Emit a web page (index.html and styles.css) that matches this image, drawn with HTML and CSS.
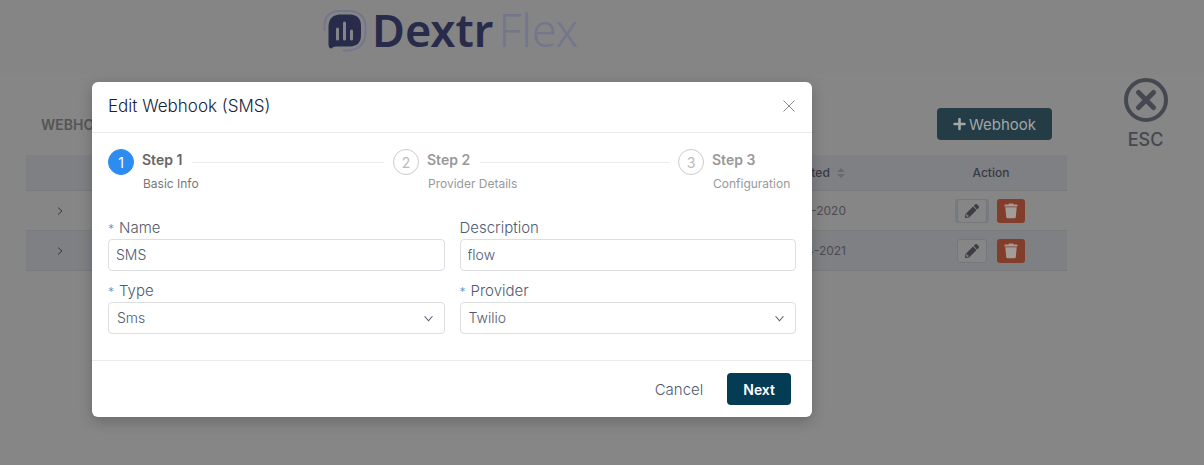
FILE: index.html
```html
<!DOCTYPE html>
<html lang="en">
<head>
<meta charset="utf-8">
<title>DextrFlex - Webhooks</title>
<link rel="stylesheet" href="styles.css">
</head>
<body>
<svg class="sprite" aria-hidden="true">
  <symbol id="pencil" viewBox="0 0 512 512"><path d="M497.900 142.100l-46.100 46.100c-4.700 4.700-12.300 4.700-17 0l-111-111c-4.700-4.700-4.700-12.300 0-17l46.100-46.100c18.700-18.700 49.100-18.700 67.900 0l60.100 60.100c18.800 18.700 18.800 49.100 0 67.900zM284.200 99.800L21.600 362.400.4 483.900c-2.900 16.400 11.400 30.600 27.800 27.800l121.500-21.300 262.600-262.600c4.700-4.700 4.700-12.300 0-17l-111-111c-4.800-4.700-12.400-4.700-17.100 0zM88 424h48v36.300l-64.500 11.300-31.100-31.100L51.700 376H88v48z"/></symbol>
  <symbol id="trash" viewBox="0 0 14 16"><path d="M1.300 1.500H4.500L5 .5h4l.5 1h3.200q.8 0 .8.700v.8q0 .5-.6.500H1.100Q.5 3.500.5 3v-.8q0-.7.800-.7zM1.300 4.300h11.400l-.9 9.700q-.1 1.300-1.400 1.300H3.600q-1.300 0-1.400-1.300z"/></symbol>
  <symbol id="chevron" viewBox="0 0 8 8"><path d="M2 .5L6 4 2 7.500" fill="none" stroke="currentColor" stroke-width="1"/></symbol>
</svg>

<header class="topbar">
  <a class="logo" href="#">
    <svg class="logo-mark" viewBox="0 0 44 44" aria-hidden="true">
      <path class="ring" d="M1.500 23V18Q2 4 15 3H28Q42 5 42.500 18V26Q41 41 26 42.500H20"/>
      <path class="bubble" d="M17 6.500H27Q38 7 38 18V27Q38 38 27 38.500H13Q10 38.500 8.500 40.500Q6 40.500 5.500 37V18Q6 7 17 6.500z"/>
      <path class="bars" d="M14.500 21v10M21.500 15v16M28.500 23v8"/>
    </svg>
    <span class="logo-name">Dextr</span><span class="logo-suffix">Flex</span>
  </a>
</header>

<main class="page">
  <section class="content">
    <div class="toolbar">
      <h1>WEBHOOKS</h1>
      <button class="add" type="button">
        <svg viewBox="0 0 448 512" aria-hidden="true"><path d="M416 208H272V64c0-17.670-14.330-32-32-32h-32c-17.670 0-32 14.330-32 32v144H32c-17.670 0-32 14.330-32 32v32c0 17.670 14.330 32 32 32h144v144c0 17.670 14.330 32 32 32h32c17.670 0 32-14.330 32-32V304h144c17.670 0 32-14.330 32-32v-32c0-17.670-14.330-32-32-32z"/></svg>
        Webhook
      </button>
    </div>
    <table class="hooks">
      <thead>
        <tr><th class="col-expand"></th><th></th>
          <th class="col-date">Created
            <svg class="sort" viewBox="0 0 8 10" aria-hidden="true"><path d="M4 0l4 4H0zM4 10l4-4H0z"/></svg></th>
          <th class="col-action">Action</th></tr>
      </thead>
      <tbody>
        <tr>
          <td class="col-expand"><button class="expand" type="button" aria-label="Expand row"><svg><use href="#chevron"/></svg></button></td>
          <td></td><td class="col-date date">28-10-2020</td>
          <td class="col-action"><div class="actions">
            <button class="edit focused" type="button" aria-label="Edit"><svg><use href="#pencil"/></svg></button>
            <button class="delete" type="button" aria-label="Delete"><svg><use href="#trash"/></svg></button>
          </div></td>
        </tr>
        <tr>
          <td class="col-expand"><button class="expand" type="button" aria-label="Expand row"><svg><use href="#chevron"/></svg></button></td>
          <td></td><td class="col-date date">15-04-2021</td>
          <td class="col-action"><div class="actions">
            <button class="edit" type="button" aria-label="Edit"><svg><use href="#pencil"/></svg></button>
            <button class="delete" type="button" aria-label="Delete"><svg><use href="#trash"/></svg></button>
          </div></td>
        </tr>
      </tbody>
    </table>
  </section>
  <button class="escape" type="button">
    <svg viewBox="0 0 44 44" aria-hidden="true"><circle cx="22" cy="22" r="20"/><path d="M14.500 14.500l15 15M29.500 14.500l-15 15"/></svg>
    ESC
  </button>
</main>

<form class="modal" role="dialog" aria-labelledby="modal-title">
  <header class="modal-head">
    <h2 id="modal-title">Edit Webhook (SMS)</h2>
    <button class="close" type="button" aria-label="Close"><svg viewBox="0 0 12 12"><path d="M.5.5l11 11M11.500.5l-11 11"/></svg></button>
  </header>
  <div class="modal-body">
    <ol class="steps">
      <li class="step current"><span class="num">1</span><div class="step-text"><div class="step-title">Step 1</div><div class="step-desc">Basic Info</div></div></li>
      <li class="step"><span class="num">2</span><div class="step-text"><div class="step-title">Step 2</div><div class="step-desc">Provider Details</div></div></li>
      <li class="step"><span class="num">3</span><div class="step-text"><div class="step-title">Step 3</div><div class="step-desc">Configuration</div></div></li>
    </ol>
    <div class="fields">
      <div class="field"><label class="required" for="name">Name</label><input id="name" type="text" value="SMS"></div>
      <div class="field"><label for="description">Description</label><input id="description" type="text" value="flow"></div>
      <div class="field"><label class="required" for="type">Type</label>
        <div class="select"><select id="type"><option>Sms</option></select><svg><use href="#chevron"/></svg></div></div>
      <div class="field"><label class="required" for="provider">Provider</label>
        <div class="select"><select id="provider"><option>Twilio</option></select><svg><use href="#chevron"/></svg></div></div>
    </div>
  </div>
  <footer class="modal-foot">
    <button class="cancel" type="button">Cancel</button>
    <button class="next" type="submit">Next</button>
  </footer>
</form>
</body>
</html>
```
FILE: styles.css
```css
* { box-sizing: border-box; }
body { margin: 0; min-height: 100vh; background: #868686; color: #383a40; font-family: Inter, "Open Sans", sans-serif; font-size: 14px; }
button { border: 0; margin: 0; padding: 0; background: none; color: inherit; font: inherit; cursor: pointer; }
h1, h2, ol { margin: 0; padding: 0; }
svg { display: block; fill: currentColor; }
.sprite { position: absolute; width: 0; height: 0; }

.topbar { height: 74px; padding: 8px 0 0 323px; background: #858585; }
.logo { display: inline-flex; align-items: center; height: 44px; color: #292b4b; font-family: "Noto Sans", sans-serif; font-size: 45px; line-height: 44px; text-decoration: none; }
.logo-mark { width: 44px; height: 44px; margin-right: 5px; }
.ring { fill: none; stroke: #74768d; stroke-width: 2; }
.bars { fill: none; stroke: #858589; stroke-width: 3; stroke-linecap: round; }
.logo-name { font-weight: 600; }
.logo-suffix { margin-left: 5px; color: #74768c; font-weight: 300; }

.page { display: grid; grid-template-columns: 1fr 117px; gap: 20px; align-items: start; padding-left: 26px; }
.toolbar { display: flex; align-items: center; justify-content: space-between; padding: 34px 15px 15px; }
.toolbar h1 { color: #555; font-size: 14px; font-weight: 600; }
.add { display: flex; align-items: center; gap: 3px; height: 32px; padding: 0 16px; border-radius: 4px; background: #233c46; color: #a2a7a9; font-size: 15px; font-weight: 400; }
.add svg { width: 13px; height: 14px; }

.hooks { width: 100%; table-layout: fixed; border-collapse: separate; border-spacing: 0; font-size: 12px; }
.hooks th, .hooks td { height: 40px; padding: 0; border-bottom: 1px solid #797a7c; text-align: center; }
.hooks th { height: 36px; background: #7e8084; font-weight: 500; }
.hooks tr:nth-child(2) td { background: #7f8083; }
.hooks .col-expand { width: 68px; }
.hooks .col-action { width: 152px; }
.hooks .col-date { width: 205px; padding-right: 70px; text-align: right; white-space: nowrap; }
.hooks td.date { color: #4c4d52; padding-right: 69px; }
.sort { display: inline-block; width: 8px; height: 10px; margin-left: 4px; color: #696a6e; vertical-align: -1px; }
.expand svg { width: 8px; height: 8px; }
.actions { display: flex; justify-content: center; gap: 10px; }
.edit, .delete { display: grid; place-items: center; height: 24px; border-radius: 3px; }
.edit { width: 30px; border: 1px solid #75777a; background: #868686; color: #3b3d43; }
.edit.focused { box-shadow: -2px 0 #777c82, 2px 0 #777c82; }
.edit svg { width: 14px; height: 14px; }
.delete { width: 28px; background: #833e2b; color: #a49c99; }
.delete svg { width: 14px; height: 16px; }

.escape { display: grid; justify-items: center; gap: 6px; padding-top: 4px; color: #454850; font-size: 18px; font-weight: 500; line-height: 24px; }
.escape svg { width: 44px; height: 44px; fill: none; stroke: currentColor; }
.escape circle { stroke-width: 4; }
.escape path { stroke-width: 5; stroke-linecap: round; }

.modal { position: absolute; top: 82px; left: 92px; width: 720px; border-radius: 6px; background: #fff; box-shadow: 0 4px 14px rgba(0, 0, 0, .22); color: #515a6e; }
.modal-head { display: flex; align-items: center; justify-content: space-between; height: 51px; padding: 0 17px 2px 16px; border-bottom: 1px solid #e8eaec; }
.modal-head h2 { color: #17233d; font-size: 17px; font-weight: 300; }
.close svg { width: 12px; height: 12px; fill: none; stroke: #8c8c8c; }
.modal-body { padding: 16px 16px 26px; }
.steps { display: flex; gap: 9px; list-style: none; }
.step { display: flex; flex: 1; gap: 8px; color: #999; }
.step:last-child { flex: none; width: 118px; }
.num { display: grid; place-items: center; flex: none; width: 26px; height: 26px; border: 1px solid #ccc; border-radius: 50%; color: #bbb; font-size: 14px; }
.step-text { flex: 1; }
.step-title { display: flex; align-items: center; gap: 10px; height: 20px; font-weight: 600; }
.step:not(:last-child) .step-title::after { content: ""; flex: 1; height: 1px; margin-top: 6px; background: #e8eaec; }
.step-desc { padding: 6px 0 0 1px; font-size: 12px; line-height: 18px; white-space: nowrap; }
.current .step-title { color: #666; }
.current .step-desc { color: #777; }
.current .num { border-color: #2d8cf0; background: #2d8cf0; color: #fff; }

.fields { display: grid; grid-template-columns: 1fr 1fr; gap: 10px 15px; padding-top: 25px; }
.field label { display: block; height: 21px; font-size: 15px; font-weight: 300; line-height: 20px; }
.required::before { content: "*"; margin-right: 5px; color: #3d97d8; font-size: 12px; }
input, select { display: block; width: 100%; height: 32px; padding: 0 7px 1px; border: 1px solid #dcdee2; border-radius: 4px; background: #fff; color: #515a6e; font: inherit; font-weight: 300; }
select { appearance: none; padding-left: 8px; }
.select { display: grid; grid-template-columns: 1fr 9px; align-items: center; }
.select select { grid-area: 1 / 1 / 2 / 3; }
.select svg { grid-area: 1 / 2; width: 9px; height: 9px; transform: rotate(90deg) translateY(12px); pointer-events: none; }
.modal-foot { display: flex; align-items: center; justify-content: flex-end; gap: 24px; padding: 12px 21px; border-top: 1px solid #e8eaec; }
.cancel { font-size: 15px; font-weight: 300; }
.next { height: 32px; padding: 0 16px; border-radius: 4px; background: #043c55; color: #fff; font-weight: 600; }
```
